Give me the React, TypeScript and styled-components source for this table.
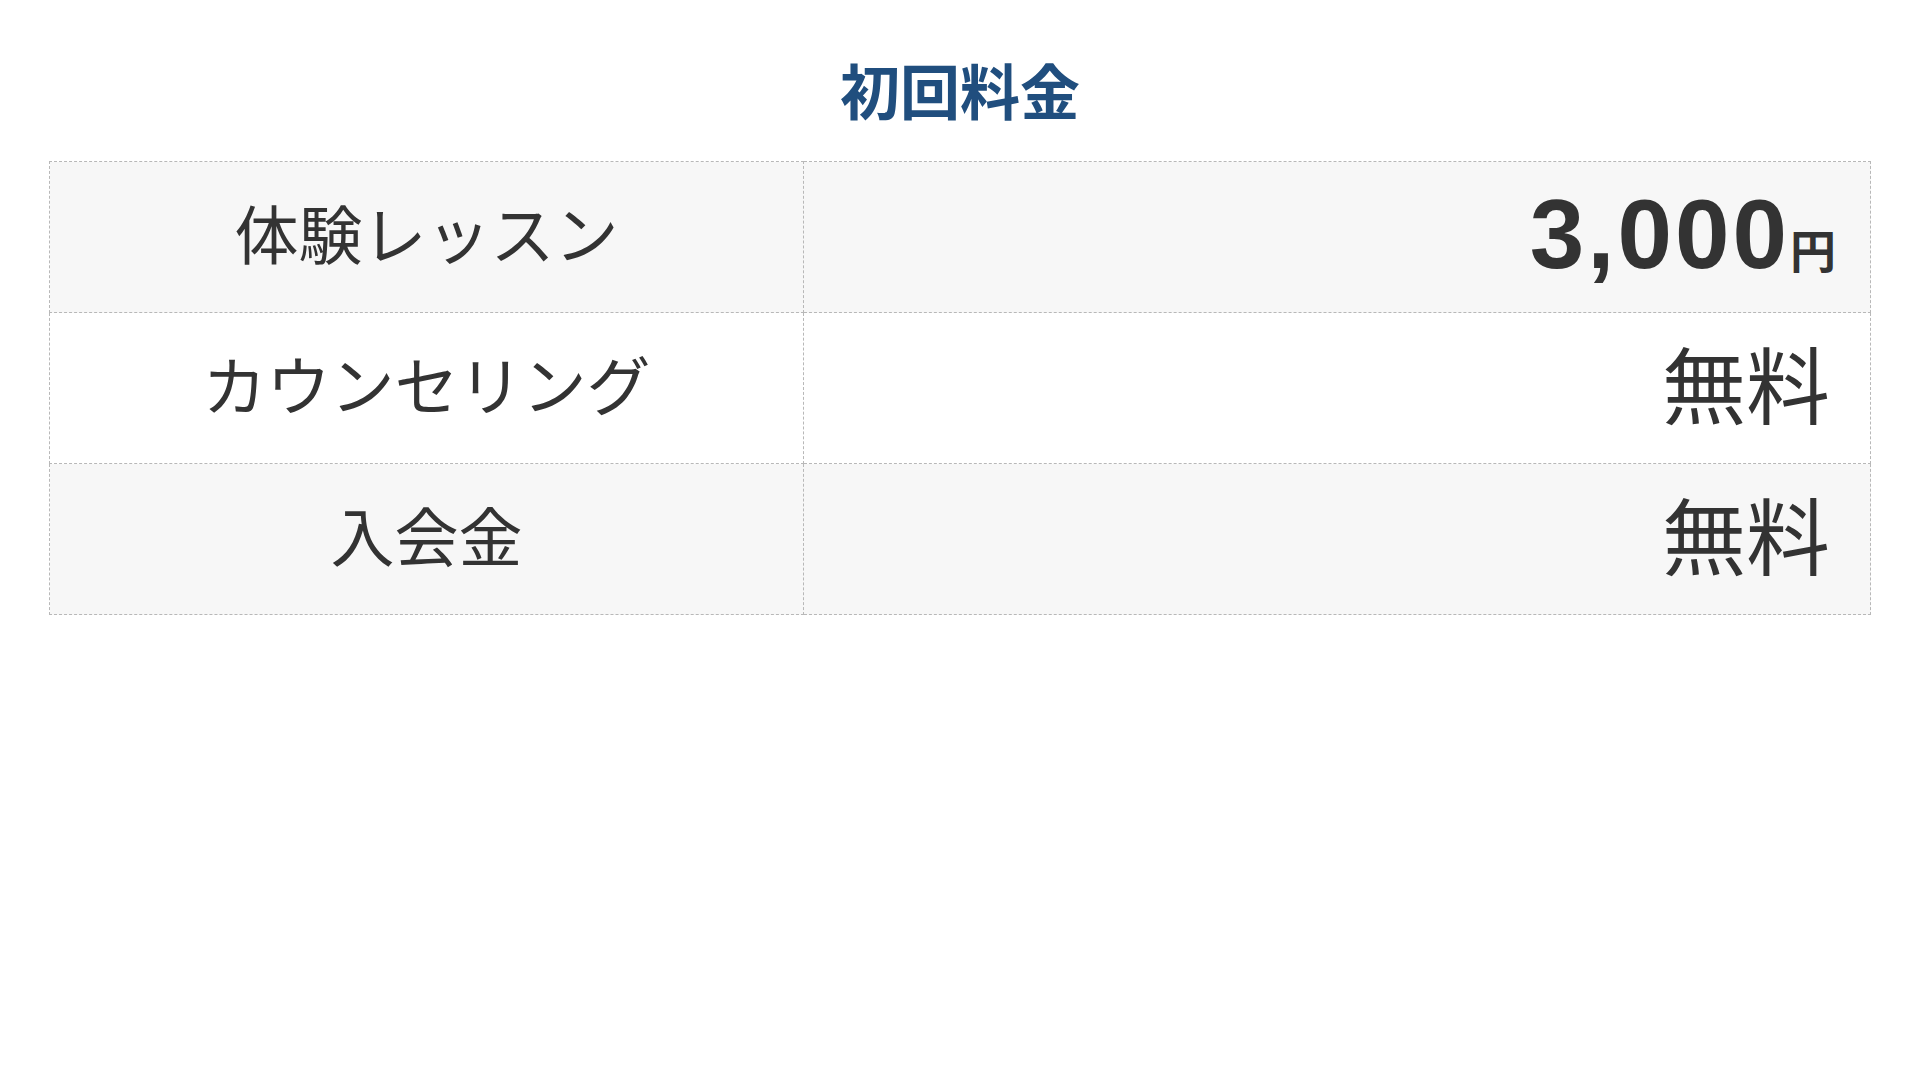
import styled, { createGlobalStyle } from "styled-components";

const GlobalStyle = createGlobalStyle`
  body {
    margin: 0;
    background: #ffffff;
    color: #333333;
    font-family: "Noto Sans CJK JP", "Noto Sans", sans-serif;
  }
`;

const Page = styled.main`
  padding: 0 49px;
`;

const Title = styled.h2`
  margin: 44px 0 27px;
  font-size: 60px;
  line-height: 90px;
  font-weight: 700;
  text-align: center;
  color: #204e7e;
`;

const PriceTable = styled.table`
  width: 100%;
  border-collapse: collapse;
  border: 1px dashed #b8b8b8;
`;

const Row = styled.tr<{ $shaded: boolean }>`
  height: 151px;
  background: ${({ $shaded }) => ($shaded ? "#f7f7f7" : "#ffffff")};
`;

const Label = styled.th`
  width: 41.4%;
  padding: 0 0 12px;
  border: 1px dashed #b8b8b8;
  font-size: 64px;
  font-weight: 400;
  line-height: 1;
  text-align: center;
  vertical-align: middle;
`;

const Value = styled.td<{ $free: boolean }>`
  padding: 0 40px ${({ $free }) => ($free ? "12px" : "6px")} 0;
  border: 1px dashed #b8b8b8;
  font-size: 84px;
  line-height: 1;
  text-align: right;
  vertical-align: middle;
`;

const Amount = styled.span`
  font-family: "Liberation Sans", Arial, sans-serif;
  font-size: 98px;
  font-weight: 700;
  letter-spacing: 3px;
`;

const Yen = styled.span`
  display: inline-block;
  margin-right: -6px;
  font-size: 46px;
  font-weight: 700;
`;

const fees = [
  { label: "体験レッスン", amount: "3,000", free: false },
  { label: "カウンセリング", amount: "", free: true },
  { label: "入会金", amount: "", free: true },
];

export default function App() {
  return (
    <Page>
      <GlobalStyle />
      <Title>初回料金</Title>
      <PriceTable>
        <tbody>
          {fees.map((fee, i) => (
            <Row key={fee.label} $shaded={i % 2 === 0}>
              <Label>{fee.label}</Label>
              <Value $free={fee.free}>
                {fee.free ? (
                  "無料"
                ) : (
                  <>
                    <Amount>{fee.amount}</Amount>
                    <Yen>円</Yen>
                  </>
                )}
              </Value>
            </Row>
          ))}
        </tbody>
      </PriceTable>
    </Page>
  );
}
